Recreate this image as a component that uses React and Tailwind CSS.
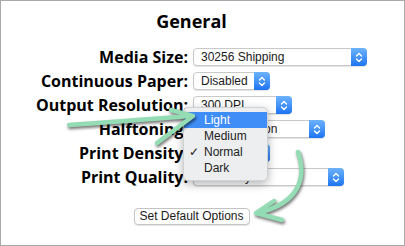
function Select({ width, value }) {
  return (
    <div
      className="flex h-[18px] items-stretch rounded-[4px] border border-[#c9c9c9] bg-white shadow-[0_1px_1px_rgba(0,0,0,0.12)]"
      style={{ width }}
    >
      <div className="flex-1 overflow-hidden whitespace-nowrap pl-[7px] text-[12px] leading-[16px] text-[#1a1a1a]">
        {value}
      </div>
      <div className="-my-px -mr-px flex w-[16px] items-center justify-center rounded-r-[4px] bg-gradient-to-b from-[#6cb3fd] to-[#1c74f2]">
        <svg width="8" height="11" viewBox="0 0 8 11" fill="none" stroke="white" strokeWidth="1.4" strokeLinecap="round" strokeLinejoin="round">
          <path d="M1.5 4 L4 1.5 L6.5 4" />
          <path d="M1.5 7 L4 9.5 L6.5 7" />
        </svg>
      </div>
    </div>
  );
}

const rows = [
  { label: 'Media Size:', width: 174, value: '30256 Shipping' },
  { label: 'Continuous Paper:', width: 77, value: 'Disabled' },
  { label: 'Output Resolution:', width: 99, value: '300 DPI' },
  { label: 'Halftoning:', width: 132, value: 'Error Diffusion' },
  { label: 'Print Density:', width: 77, value: 'Normal' },
  { label: 'Print Quality:', width: 151, value: 'Text Only' },
];

const items = ['Light', 'Medium', 'Normal', 'Dark'];

export default function App() {
  return (
    <div className="relative h-[246px] w-[405px] overflow-hidden border border-[#a9a9a9] bg-white font-['Liberation_Sans',sans-serif]">
      <h1 className="pr-[22px] pt-[10px] text-center font-['Open_Sans',sans-serif] text-[18px] font-bold leading-[20px] text-black">
        General
      </h1>

      <div className="mt-[14px] flex flex-col">
        {rows.map((r) => (
          <div key={r.label} className="flex h-[24px] items-center">
            <div className="w-[187px] shrink-0 text-right font-['Open_Sans',sans-serif] text-[16px] font-bold leading-[18px] text-black">
              {r.label}
            </div>
            <div className="ml-[5px]">
              <Select width={r.width} value={r.value} />
            </div>
          </div>
        ))}
      </div>

      <div className="mt-[19px] flex justify-center pr-[22px]">
        <button className="h-[17px] w-[116px] rounded-[4px] border border-[#c4c4c4] bg-white text-[12px] leading-[15px] text-[#1a1a1a] shadow-[0_1px_1px_rgba(0,0,0,0.1)]">
          Set Default Options
        </button>
      </div>

      {/* popup menu for Print Density */}
      <div className="absolute left-[182px] top-[106px] w-[85px] rounded-[5px] border border-[#d0d2d4] bg-[#eceef0] py-[4px] shadow-[0_3px_10px_rgba(0,0,0,0.3)]">
        {items.map((it) => (
          <div
            key={it}
            className={
              it === 'Light'
                ? 'relative flex h-[16px] items-center bg-[#3f8ef7] pl-[20px] text-[12px] text-white'
                : 'relative flex h-[16px] items-center pl-[20px] text-[12px] text-[#222]'
            }
          >
            {it === 'Normal' && <span className="absolute left-[5px] text-[12px] text-[#222]">✓</span>}
            {it}
          </div>
        ))}
      </div>

      {/* hand drawn arrows */}
      <svg
        className="pointer-events-none absolute left-[-1px] top-[-1px] drop-shadow-[1px_2px_1.5px_rgba(0,0,0,0.55)]"
        width="405"
        height="246"
        viewBox="0 0 405 246"
        fill="none"
        stroke="#94dcb4"
        strokeWidth="4.5"
        strokeLinecap="round"
        strokeLinejoin="round"
      >
        <path d="M69 125 C 105 123, 150 119, 191 116" />
        <path d="M171 110 L193 116 L157 143" />
        <path d="M298 152 C 306 175, 302 203, 257 213" />
        <path d="M274 201 L256 213 L282 220" />
      </svg>
    </div>
  );
}
